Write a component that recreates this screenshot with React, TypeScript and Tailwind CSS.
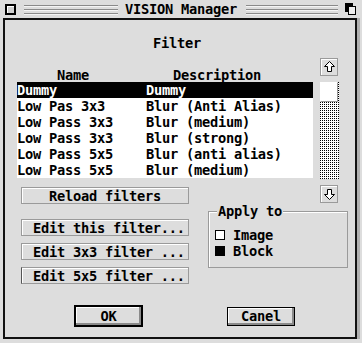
const ROWS = [
  ['Dummy', 'Dummy'],
  ['Low Pas 3x3', 'Blur (Anti Alias)'],
  ['Low Pass 3x3', 'Blur (medium)'],
  ['Low Pass 3x3', 'Blur (strong)'],
  ['Low Pass 5x5', 'Blur (anti alias)'],
  ['Low Pass 5x5', 'Blur (medium)'],
];

function TitleLines({ w }: { w: string }) {
  return (
    <div className={`${w} flex flex-col gap-[3px]`}>
      <div className="h-px bg-[#8a8a8a] shadow-[0_1px_0_#f4f4f4]" />
      <div className="h-px bg-[#8a8a8a] shadow-[0_1px_0_#f4f4f4]" />
      <div className="h-px bg-[#8a8a8a] shadow-[0_1px_0_#f4f4f4]" />
    </div>
  );
}

function Arrow({ down }: { down?: boolean }) {
  return (
    <svg width="11" height="12" viewBox="0 0 11 12" className={down ? 'rotate-180' : ''}>
      <polygon
        points="5.5,0.5 10.5,5.5 7.5,5.5 7.5,10.5 3.5,10.5 3.5,5.5 0.5,5.5"
        fill="#fff"
        stroke="#000"
        strokeWidth="1"
      />
    </svg>
  );
}

function ArrowBtn({ down }: { down?: boolean }) {
  return (
    <div className="flex h-[18px] w-[18px] items-center justify-center border border-[#9a9a9a] bg-[#dddddd] shadow-[inset_1px_1px_0_#fff]">
      <Arrow down={down} />
    </div>
  );
}

function SideBtn({ label, center, focus }: { label: string; center?: boolean; focus?: boolean }) {
  return (
    <div
      className={`flex h-[17px] w-[168px] items-center whitespace-pre border border-[#9a9a9a] bg-[#dddddd] shadow-[inset_1px_1px_0_#fff] ${
        center ? 'justify-center' : 'pl-[11px]'
      } ${focus ? 'border-l-[#555]' : ''}`}
    >
      {label}
    </div>
  );
}

export default function App() {
  return (
    <div className="h-[343px] w-[362px] overflow-hidden bg-[#dddddd] font-['DejaVu_Sans_Mono',monospace] text-[13.7px] font-bold leading-[16px] tracking-[-0.25px] text-black">
      {/* title bar */}
      <div className="flex h-[18px] items-center pl-[5px]">
        <div className="h-[11px] w-[11px] border-2 border-black bg-[#cfcfcf] shadow-[inset_1px_1px_0_#fff]" />
        <div className="ml-[8px]">
          <TitleLines w="w-[94px]" />
        </div>
        <div className="ml-[7px] w-[112px] whitespace-pre">VISION Manager</div>
        <div className="ml-[9px]">
          <TitleLines w="w-[92px]" />
        </div>
        <svg width="11" height="12" viewBox="0 0 11 12" className="ml-[7px]">
          <rect x="0" y="0" width="8" height="9" fill="#000" />
          <rect x="3.5" y="3.5" width="7" height="8" fill="#eee" stroke="#000" />
        </svg>
      </div>

      {/* window */}
      <div className="ml-[3px] h-[321px] w-[354px] border-2 border-[#111] shadow-[3px_0_0_#b0b0b0]">
        <div className="mt-[15px] h-[16px] pr-[6px] text-center">Filter</div>

        <div className="flex">
          <div className="ml-[12px] w-[296px]">
            <div className="relative mt-[17px] h-[14px]">
              <span className="absolute left-[40px] top-[-1px]">Name</span>
              <span className="absolute left-[156px] top-[-1px]">Description</span>
            </div>
            <div className="h-[96px] bg-white">
              {ROWS.map(([name, desc], i) => (
                <div
                  key={i}
                  className={`flex h-[16px] whitespace-pre ${i === 0 ? 'bg-black text-white' : ''}`}
                >
                  <span className="w-[129px]">{name}</span>
                  <span>{desc}</span>
                </div>
              ))}
            </div>
            <div className="ml-[4px] mt-[9px]">
              <SideBtn label="Reload filters" center />
            </div>
          </div>

          <div className="ml-[7px] mt-[7px] flex flex-col">
            <ArrowBtn />
            <div className="relative mt-[6px] h-[97px] w-[19px] border-r border-dotted border-black bg-white">
              <svg width="18" height="97" className="absolute left-0 top-0">
                <defs>
                  <pattern id="dots" width="2" height="2" patternUnits="userSpaceOnUse">
                    <rect x="0" y="0" width="1" height="1" fill="#000" />
                  </pattern>
                </defs>
                <rect x="0" y="0" width="18" height="97" fill="url(#dots)" />
              </svg>
              <div className="relative h-[20px] w-[18px] border border-[#9a9a9a] border-l-white border-t-white bg-white" />
            </div>
            <div className="mt-[6px]">
              <ArrowBtn down />
            </div>
          </div>
        </div>

        <div className="flex">
          <div className="ml-[16px] mt-[15px] flex flex-col gap-[7px]">
            <SideBtn label="Edit this filter..." />
            <SideBtn label="Edit 3x3 filter ..." />
            <SideBtn label="Edit 5x5 filter ..." focus />
          </div>
          <div className="relative ml-[19px] mt-[7px] h-[57px] w-[140px] border border-[#9a9a9a] shadow-[inset_1px_1px_0_#fff]">
            <span className="absolute left-[8px] top-[-9px] bg-[#dddddd] px-px">Apply to</span>
            <div className="flex flex-col pl-[6px] pt-[15px]">
              <div className="flex h-[16px] items-center gap-[8px]">
                <div className="h-[10px] w-[10px] border border-black bg-white" />
                <span>Image</span>
              </div>
              <div className="flex h-[16px] items-center gap-[8px]">
                <div className="h-[10px] w-[10px] bg-black" />
                <span>Block</span>
              </div>
            </div>
          </div>
        </div>

        <div className="mt-[21px] flex items-center">
          <div className="ml-[69px] flex h-[22px] w-[69px] items-center justify-center border-2 border-black bg-[#dddddd] shadow-[inset_-2px_-2px_0_#8a8a8a,inset_1px_1px_0_#fff]">
            OK
          </div>
          <div className="ml-[84px] flex h-[19px] w-[68px] items-center justify-center border border-black bg-[#dddddd] shadow-[inset_-2px_-2px_0_#8a8a8a,inset_1px_1px_0_#fff]">
            Canel
          </div>
        </div>
      </div>
    </div>
  );
}
